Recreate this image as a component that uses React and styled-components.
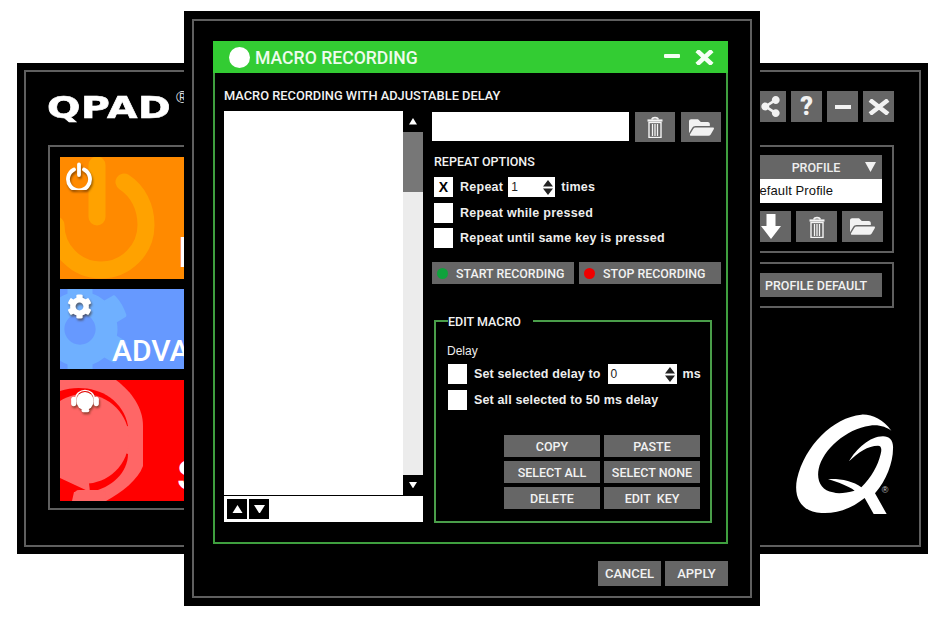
import styled, { createGlobalStyle } from "styled-components";
import { FaCog, FaFolderOpen, FaShareAlt } from "react-icons/fa";

const GlobalStyle = createGlobalStyle`
  html, body {
    margin: 0;
    padding: 0;
    background: #fff;
  }
  * {
    box-sizing: border-box;
  }
`;

const Stage = styled.div`
  position: relative;
  width: 938px;
  height: 625px;
  overflow: hidden;
  background: #fff;
  font-family: "Liberation Sans", Arial, sans-serif;
  color: #fff;
`;

/* ---- shared bits ---- */

const GrayButton = styled.button`
  display: flex;
  align-items: center;
  justify-content: ${(p) => (p.$start ? "flex-start" : "center")};
  flex: none;
  width: ${(p) => p.$w || 40}px;
  height: ${(p) => p.$h || 30}px;
  padding: 0 0 0 ${(p) => (p.$start ? 5 : 0)}px;
  border: none;
  background: #666;
  color: #f2f2f2;
  font-family: "Roboto", "Liberation Sans", sans-serif;
  font-size: ${(p) => p.$size || 13}px;
  font-weight: ${(p) => p.$weight || 500};
  white-space: pre;
`;

const CheckBox = styled.span`
  display: flex;
  align-items: center;
  justify-content: center;
  flex: none;
  width: 19px;
  height: 20px;
  background: #fff;
  color: #000;
  font-size: 14px;
  font-weight: 700;
`;

const OptionRow = styled.div`
  display: flex;
  align-items: center;
  height: 20px;
  gap: 7px;
  font-size: 12.5px;
  font-weight: 700;
  letter-spacing: ${(p) => p.$track || 0.26}px;
  color: #eee;
  white-space: nowrap;
`;

const Spinner = styled.span`
  display: flex;
  align-items: center;
  justify-content: space-between;
  flex: none;
  width: ${(p) => p.$w}px;
  height: 20px;
  margin: 0 -1px 0 ${(p) => p.$gap || 0}px;
  padding: 0 2px 0 3px;
  background: #fff;
  color: #222;
  font-size: 12px;
  font-weight: 400;
`;

const SpinArrows = () => (
  <svg width="10" height="15" viewBox="0 0 10 15">
    <path d="M5 0L10 6.500H0Z M5 15L0 8.500H10Z" fill="#222" />
  </svg>
);

const Trash = () => (
  <svg width="16" height="22" viewBox="0 0 16 22" fill="none" stroke="#f4f4f4">
    <path d="M0.500 4.500H15.500" strokeWidth="2.200" />
    <path d="M5 3.500C5 1 11 1 11 3.500" strokeWidth="1.800" />
    <rect x="2" y="6.500" width="12" height="15" strokeWidth="1.400" />
    <path d="M5.500 8V20M8 8V20M10.500 8V20" strokeWidth="1.300" />
  </svg>
);

/* ---- main window behind ---- */

const BackWindow = styled.section`
  position: absolute;
  left: 17px;
  top: 63px;
  width: 911px;
  height: 491px;
  padding: 7px;
  background: #000;
`;

const BackFrame = styled.div`
  display: flex;
  justify-content: space-between;
  height: 100%;
  padding: 19px 25px 0 22px;
  border: 2px solid #5f5f5f;
`;

const LeftColumn = styled.div`
  display: flex;
  flex-direction: column;
  width: 420px;
`;

const LogoRow = styled.div`
  display: flex;
  align-items: flex-start;
  height: 54px;
`;

const Logo = styled.span`
  display: block;
  width: 127px;
  margin: -4px 0 0 -1px;
  font-family: "DejaVu Sans", sans-serif;
  font-size: 31px;
  line-height: 40px;
  font-weight: 700;
  letter-spacing: 0.5px;
  -webkit-text-stroke: 0.6px #fff;
  transform: scaleX(1.27);
  transform-origin: left center;
  white-space: nowrap;
`;

const Registered = styled.span`
  margin: -1px 0 0 2px;
  font-size: 17px;
  line-height: 16px;
  color: #ddd;
`;

const TilePanel = styled.div`
  display: flex;
  flex-direction: column;
  gap: 10px;
  height: 365px;
  padding: 10px;
  border: 2px solid #5f5f5f;
`;

const Tile = styled.div`
  position: relative;
  flex: none;
  height: ${(p) => p.$h}px;
  margin-top: ${(p) => p.$mt || 0}px;
  padding: ${(p) => p.$pt}px 0 0 ${(p) => p.$pl}px;
  overflow: hidden;
  background: ${(p) => p.$bg};
  font-family: "Roboto", "Liberation Sans", sans-serif;
  font-size: ${(p) => p.$size}px;
  font-weight: 500;
  line-height: ${(p) => p.$size + 8}px;
  white-space: nowrap;
`;

const TileArt = styled.svg`
  position: absolute;
  left: 0;
  top: 0;
`;

const TileIcon = styled.span`
  position: absolute;
  left: ${(p) => p.$x}px;
  top: ${(p) => p.$y}px;
  display: flex;
  color: #fff;
  filter: drop-shadow(1px 2px 1px rgba(60, 30, 0, 0.55));
`;

const BigGear = styled(TileIcon)`
  color: #6fb0ff;
  filter: none;
`;

const TileLabel = styled.span`
  position: relative;
`;

const RightColumn = styled.div`
  display: flex;
  flex-direction: column;
  flex: none;
  width: 156px;
`;

const WindowButtons = styled.div`
  display: flex;
  justify-content: flex-end;
  gap: 5px;
  height: 54px;
`;

const SidePanel = styled.div`
  display: flex;
  flex-direction: column;
  align-items: flex-end;
  padding: ${(p) => p.$pad};
  margin-top: ${(p) => p.$mt || 0}px;
  height: ${(p) => p.$h}px;
  border: 2px solid #5f5f5f;
`;

const ProfileHead = styled.div`
  display: flex;
  align-items: center;
  justify-content: center;
  position: relative;
  width: 132px;
  height: 24px;
  background: #666;
  font-family: "Roboto", "Liberation Sans", sans-serif;
  font-size: 12.500px;
  font-weight: 500;
  color: #eee;
`;

const ProfileCaret = styled.svg`
  position: absolute;
  right: 6px;
  top: 7px;
`;

const ProfileValue = styled.div`
  width: 132px;
  height: 24px;
  background: #fff;
  color: #111;
  font-size: 13px;
  letter-spacing: 0.1px;
  line-height: 24px;
`;

const ProfileTools = styled.div`
  display: flex;
  gap: 5px;
  margin: 8px -1px 0 0;
`;

const QMark = styled.svg`
  align-self: flex-end;
  flex: none;
  margin-top: 105px;
`;

/* ---- macro recording dialog ---- */

const Dialog = styled.section`
  position: absolute;
  left: 184px;
  top: 11px;
  width: 576px;
  height: 595px;
  padding: 8px;
  background: #000;
`;

const DialogFrame = styled.div`
  display: flex;
  flex-direction: column;
  height: 100%;
  padding: 20px 22px 0 19px;
  border: 2px solid #5f5f5f;
`;

const Panel = styled.div`
  display: flex;
  flex-direction: column;
  height: 503px;
  border: solid #3f9f3f;
  border-width: 0 2px 2px;
`;

const TitleBar = styled.header`
  display: flex;
  align-items: center;
  flex: none;
  height: 32px;
  margin: 0 -2px;
  padding: 0 14px 0 16px;
  background: #33cc33;
`;

const TitleDot = styled.span`
  width: 21px;
  height: 21px;
  border-radius: 50%;
  background: #fff;
`;

const TitleText = styled.h1`
  flex: 1;
  margin: 1px 0 0 5px;
  font-family: "Roboto", "Liberation Sans", sans-serif;
  font-size: 17.600px;
  font-weight: 500;
  color: #eefbee;
`;

const TitleIcon = styled.svg`
  flex: none;
  margin-left: ${(p) => p.$ml || 0}px;
  margin-top: ${(p) => p.$mt || 0}px;
`;

const PanelBody = styled.div`
  flex: 1;
  padding: 15px 5px 0 9px;
`;

const Heading = styled.div`
  height: 16px;
  margin-bottom: 7px;
  font-family: "Roboto", "Liberation Sans", sans-serif;
  font-size: 12.830px;
  line-height: 16px;
  font-weight: 500;
  color: #f2f2f2;
`;

const Columns = styled.div`
  display: flex;
  gap: 9px;
`;

const ListColumn = styled.div`
  display: flex;
  flex-direction: column;
  flex: none;
  width: 199px;
`;

const MacroList = styled.div`
  display: flex;
  justify-content: flex-end;
  height: 384px;
  background: #fff;
`;

const Scrollbar = styled.div`
  display: flex;
  flex-direction: column;
  width: 20px;
  background: #ececec;
`;

const ScrollArrow = styled.span`
  display: flex;
  align-items: center;
  justify-content: center;
  flex: none;
  width: 20px;
  height: ${(p) => p.$h || 20}px;
  background: #000;
`;

const ScrollThumb = styled.div`
  flex: none;
  height: 60px;
  background: #777;
`;

const ScrollTrack = styled.div`
  flex: 1;
`;

const ListFooter = styled.div`
  display: flex;
  gap: 2px;
  height: 26px;
  margin-top: 1px;
  padding: 3px;
  background: #fff;
`;

const MoveButton = styled.span`
  display: flex;
  align-items: center;
  justify-content: center;
  width: 20px;
  height: 20px;
  background: #000;
`;

const Triangle = ({ down, size = 8 }) => (
  <svg width={size} height={size * 0.8} viewBox="0 0 10 8">
    <path d={down ? "M0 0H10L5 8Z" : "M5 0L10 8H0Z"} fill="#fff" />
  </svg>
);

const OptionsColumn = styled.div`
  flex: 1;
  padding-top: 1px;
`;

const NameRow = styled.div`
  display: flex;
  gap: 6px;
`;

const NameInput = styled.div`
  width: 197px;
  height: 29px;
  background: #fff;
`;

const SectionLabel = styled.div`
  height: 16px;
  margin: 12px 0 7px 2px;
  font-family: "Roboto", "Liberation Sans", sans-serif;
  font-size: 12.500px;
  line-height: 16px;
  font-weight: 500;
  color: #f2f2f2;
`;

const RepeatGroup = styled.div`
  display: flex;
  flex-direction: column;
  gap: 5.500px;
  padding-left: 2px;
`;

const RecordRow = styled.div`
  display: flex;
  gap: 5px;
  margin-top: 14px;
`;

const RecordLabel = styled.span`
  display: flex;
  align-items: center;
  gap: 8px;
`;

const RecordDot = styled.span`
  width: 11px;
  height: 11px;
  border-radius: 50%;
  background: ${(p) => p.$color};
`;

const EditBox = styled.fieldset`
  min-width: 0;
  width: 278px;
  height: 210px;
  margin: 29px 0 0 2px;
  padding: 0 10px 0 12px;
  border: 2px solid #4a9e4a;
`;

const EditLegend = styled.legend`
  height: 16px;
  margin-left: 0;
  padding: 0 12px 0 0;
  font-family: "Roboto", "Liberation Sans", sans-serif;
  font-size: 12.500px;
  line-height: 18px;
  font-weight: 500;
  color: #f2f2f2;
`;

const DelayLabel = styled.div`
  height: 16px;
  margin: 14px 0 5px -1px;
  font-size: 12px;
  line-height: 16px;
  color: #eee;
`;

const DelayGroup = styled.div`
  display: flex;
  flex-direction: column;
  gap: 6px;
`;

const EditGrid = styled.div`
  display: grid;
  grid-template-columns: 96px 96px;
  grid-auto-rows: 22px;
  gap: 4px;
  justify-content: end;
  margin-top: 25px;
`;

const DialogFooter = styled.footer`
  display: flex;
  justify-content: flex-end;
  gap: 4px;
  margin-top: 17px;
`;

const editButtons = ["COPY", "PASTE", "SELECT ALL", "SELECT NONE", "DELETE", "EDIT  KEY"];

export default function App() {
  return (
    <Stage>
      <GlobalStyle />

      <BackWindow>
        <BackFrame>
          <LeftColumn>
            <LogoRow>
              <Logo>QPAD</Logo>
              <Registered>®</Registered>
            </LogoRow>
            <TilePanel>
              <Tile $h={122} $bg="#ff8a00" $pl={118} $pt={71} $size={42}>
                <TileArt width="130" height="122" viewBox="0 0 130 122" fill="none" stroke="#ffa200" strokeWidth="17" strokeLinecap="round">
                  <path d="M64 25C78 34 86 50 86 68A45 45 0 1 1 -4 68" />
                  <path d="M37 8V60" />
                </TileArt>
                <TileIcon $x={6} $y={5}>
                  <svg width="26" height="28" viewBox="0 0 26 28" fill="none" stroke="#fff" strokeWidth="3.800" strokeLinecap="round">
                    <path d="M8 7.500A11 11 0 1 0 18 7.500" />
                    <path d="M13 2.500V13" />
                  </svg>
                </TileIcon>
                <TileLabel>PROFILES</TileLabel>
              </Tile>
              <Tile $h={80} $bg="#6699ff" $pl={52} $pt={43} $size={30}>
                <BigGear $x={-30} $y={-10}>
                  <FaCog size={100} />
                </BigGear>
                <TileIcon $x={7} $y={5}>
                  <FaCog size={25} />
                </TileIcon>
                <TileLabel>ADVANCED</TileLabel>
              </Tile>
              <Tile $h={121} $mt={1} $bg="#ff0000" $pl={117} $pt={71} $size={42}>
                <TileArt width="90" height="121" viewBox="0 0 90 121">
                  <path d="M0 0H56C72 12 83 28 83 46V86C78 100 62 112 46 121H0Z" fill="#ff6666" />
                  <path d="M68 74C68 92 52 108 30 112L24 60Z" fill="#ff0000" />
                  <path d="M0 98L30 112H14L12 121H0Z" fill="#ff0000" />
                  <path d="M0 11C28 2 62 14 68 46L24 60H0Z" fill="#ff0000" />
                  <rect x="14" y="110" width="32" height="12" rx="5" fill="#ff6666" />
                  <circle cx="24" cy="59" r="45" fill="#ff6666" />
                </TileArt>
                <TileIcon $x={9} $y={8}>
                  <svg width="32" height="26" viewBox="0 0 32 30" fill="#fff">
                    <ellipse cx="16" cy="15" rx="10" ry="10.500" />
                    <path d="M5 14C5 -1 27 -1 27 14" fill="none" stroke="#fff" strokeWidth="1.600" />
                    <rect x="0" y="10" width="6" height="11" rx="3" />
                    <rect x="26" y="10" width="6" height="11" rx="3" />
                    <rect x="12" y="24" width="9" height="4" rx="2" />
                  </svg>
                </TileIcon>
                <TileLabel>SUPPORT</TileLabel>
              </Tile>
            </TilePanel>
          </LeftColumn>

          <RightColumn>
            <WindowButtons>
              <GrayButton $w={31} $h={31}>
                <FaShareAlt size={21} />
              </GrayButton>
              <GrayButton $w={31} $h={31} $size={25} $weight={900}>?</GrayButton>
              <GrayButton $w={31} $h={31}>
                <svg width="16" height="4"><rect width="16" height="4" fill="#f2f2f2" /></svg>
              </GrayButton>
              <GrayButton $w={31} $h={31}>
                <svg width="24" height="16" viewBox="0 0 24 16">
                  <path d="M3 1L21 15M21 1L3 15" stroke="#f2f2f2" strokeWidth="4.500" />
                </svg>
              </GrayButton>
            </WindowButtons>

            <SidePanel $h={108} $pad="8px 10px 0 0">
              <ProfileHead>
                PROFILE
                <ProfileCaret width="11" height="10" viewBox="0 0 11 10">
                  <path d="M0 0H11L5.500 10Z" fill="#f2f2f2" />
                </ProfileCaret>
              </ProfileHead>
              <ProfileValue>Default Profile</ProfileValue>
              <ProfileTools>
                <GrayButton $w={41} $h={31}>
                  <svg width="20" height="25" viewBox="0 0 20 25">
                    <path d="M5.500 0H14.500V12H20L10 25L0 12H5.500Z" fill="#fff" />
                  </svg>
                </GrayButton>
                <GrayButton $w={41} $h={31}>
                  <Trash />
                </GrayButton>
                <GrayButton $w={41} $h={31}>
                  <FaFolderOpen size={25} />
                </GrayButton>
              </ProfileTools>
            </SidePanel>

            <SidePanel $h={46} $mt={9} $pad="9px 10px 0 0">
              <GrayButton $w={132} $h={24} $size={12.500}>PROFILE DEFAULT</GrayButton>
            </SidePanel>

            <QMark width="98" height="102" viewBox="139 42 294 306">
              <path
                fill="#fff"
                d="M425 95C400 60 365 45 335 47C250 55 165 140 142 240C130 300 160 340 215 342C265 345 310 325 345 297L372 345L411 345L376 283C410 245 430 190 430 150C432 125 420 112 400 112C360 112 320 150 298 187C325 160 355 140 385 140C395 140 397 150 393 165C385 200 365 235 335 265C310 245 270 238 235 240C265 250 295 260 315 275C290 282 265 285 250 280C215 275 200 245 207 210C220 150 290 90 360 80C390 76 410 85 425 95Z"
              />
              <text x="406" y="282" fontSize="27" fill="#ccc" textAnchor="middle" fontFamily="Liberation Sans">®</text>
            </QMark>
          </RightColumn>
        </BackFrame>
      </BackWindow>

      <Dialog>
        <DialogFrame>
          <Panel>
            <TitleBar>
              <TitleDot />
              <TitleText>MACRO RECORDING</TitleText>
              <TitleIcon width="16" height="4" $mt={-3}>
                <rect width="16" height="4" rx="1" fill="#f4fff4" />
              </TitleIcon>
              <TitleIcon $ml={15} width="19" height="15" viewBox="0 0 19 15">
                <path d="M2 0.500L17 14.500M17 0.500L2 14.500" stroke="#f4fff4" strokeWidth="4.500" />
              </TitleIcon>
            </TitleBar>

            <PanelBody>
              <Heading>MACRO RECORDING WITH ADJUSTABLE DELAY</Heading>
              <Columns>
                <ListColumn>
                  <MacroList>
                    <Scrollbar>
                      <ScrollArrow $h={21}><Triangle /></ScrollArrow>
                      <ScrollThumb />
                      <ScrollTrack />
                      <ScrollArrow><Triangle down /></ScrollArrow>
                    </Scrollbar>
                  </MacroList>
                  <ListFooter>
                    <MoveButton><Triangle size={11} /></MoveButton>
                    <MoveButton><Triangle down size={11} /></MoveButton>
                  </ListFooter>
                </ListColumn>

                <OptionsColumn>
                  <NameRow>
                    <NameInput />
                    <GrayButton $w={40} $h={30}><Trash /></GrayButton>
                    <GrayButton $w={40} $h={30}><FaFolderOpen size={25} /></GrayButton>
                  </NameRow>

                  <SectionLabel>REPEAT OPTIONS</SectionLabel>
                  <RepeatGroup>
                    <OptionRow>
                      <CheckBox>X</CheckBox>
                      Repeat
                      <Spinner $w={47} $gap={-2}>1<SpinArrows /></Spinner>
                      times
                    </OptionRow>
                    <OptionRow><CheckBox />Repeat while pressed</OptionRow>
                    <OptionRow><CheckBox />Repeat until same key is pressed</OptionRow>
                  </RepeatGroup>

                  <RecordRow>
                    <GrayButton $w={142} $h={22} $size={12.400} $start>
                      <RecordLabel><RecordDot $color="#0fa23c" />START RECORDING</RecordLabel>
                    </GrayButton>
                    <GrayButton $w={142} $h={22} $size={12.400} $start>
                      <RecordLabel><RecordDot $color="#f00000" />STOP RECORDING</RecordLabel>
                    </GrayButton>
                  </RecordRow>

                  <EditBox>
                    <EditLegend>EDIT MACRO</EditLegend>
                    <DelayLabel>Delay</DelayLabel>
                    <DelayGroup>
                      <OptionRow $track={0.14}>
                        <CheckBox />
                        Set selected delay to
                        <Spinner $w={69}>0<SpinArrows /></Spinner>
                        ms
                      </OptionRow>
                      <OptionRow $track={0.14}><CheckBox />Set all selected to 50 ms delay</OptionRow>
                    </DelayGroup>
                    <EditGrid>
                      {editButtons.map((label) => (
                        <GrayButton key={label} $w={96} $h={22} $size={12.500}>{label}</GrayButton>
                      ))}
                    </EditGrid>
                  </EditBox>
                </OptionsColumn>
              </Columns>
            </PanelBody>
          </Panel>

          <DialogFooter>
            <GrayButton $w={63} $h={25}>CANCEL</GrayButton>
            <GrayButton $w={63} $h={25}>APPLY</GrayButton>
          </DialogFooter>
        </DialogFrame>
      </Dialog>
    </Stage>
  );
}
